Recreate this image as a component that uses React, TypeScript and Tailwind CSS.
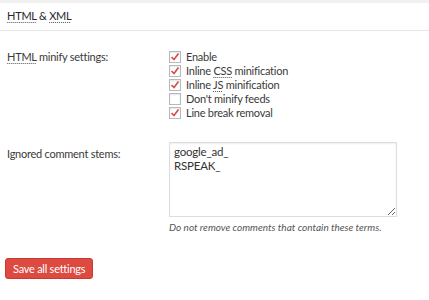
import React from "react";

const options = [
  { label: "Enable", checked: true },
  { label: "Inline CSS minification", checked: true, abbr: "CSS" },
  { label: "Inline JS minification", checked: true, abbr: "JS" },
  { label: "Don't minify feeds", checked: false },
  { label: "Line break removal", checked: true },
];

function Abbr({ children }: { children: React.ReactNode }) {
  return <abbr className="no-underline bg-[linear-gradient(to_right,#555_1px,transparent_1px)] bg-[length:2px_1px] bg-repeat-x bg-bottom pb-[1px]">{children}</abbr>;
}

function Check({ checked }: { checked: boolean }) {
  return (
    <span className="w-[12px] h-[12px] shrink-0 border border-[#b4b9be] bg-white flex items-center justify-center shadow-[inset_0_1px_2px_rgba(0,0,0,0.1)]">
      {checked && (
        <svg width="10" height="10" viewBox="0 0 10 10">
          <path d="M1.5 5 L4 7.5 L8.5 1.5" fill="none" stroke="#d54e4e" strokeWidth="1.7" />
        </svg>
      )}
    </span>
  );
}

function renderLabel(label: string, abbr?: string) {
  if (!abbr) return label;
  const [a, b] = label.split(abbr);
  return (
    <>
      {a}
      <Abbr>{abbr}</Abbr>
      {b}
    </>
  );
}

export default function App() {
  return (
    <div className="w-[429px] h-[300px] bg-white text-[#3a3a3a] text-[11px] tracking-[-0.25px] font-['Lato',sans-serif] border-t-[3px] border-[#f1f1f1]">
      <div className="h-[28px] border-b border-[#e5e5e5] flex items-center px-[7px] text-[11px] text-[#23282d]">
        <span>
          <Abbr>HTML</Abbr> &amp; <Abbr>XML</Abbr>
        </span>
      </div>

      <div className="flex pt-[19px] pl-[7px]">
        <div className="w-[162px] leading-[14px]">
          <Abbr>HTML</Abbr> minify settings:
        </div>
        <div className="flex flex-col">
          {options.map((o) => (
            <label key={o.label} className="flex items-center h-[14px] gap-[5px]">
              <Check checked={o.checked} />
              <span className="leading-[14px]">{renderLabel(o.label, o.abbr)}</span>
            </label>
          ))}
        </div>
      </div>

      <div className="flex pt-[22px] pl-[7px]">
        <div className="w-[162px] pt-[4px]">Ignored comment stems:</div>
        <div className="flex flex-col">
          <textarea
            className="w-[228px] h-[75px] border border-[#ddd] px-[4px] py-[2px] text-[11.5px] leading-[14px] tracking-[-0.2px] text-[#333] resize-y outline-none shadow-[inset_0_1px_2px_rgba(0,0,0,0.07)] font-['Lato',sans-serif]"
            defaultValue={"google_ad_\nRSPEAK_"}
          />
          <p className="italic text-[10px] tracking-normal text-[#555] mt-[3px]">Do not remove comments that contain these terms.</p>
        </div>
      </div>

      <div className="pt-[23px] pl-[5px]">
        <button className="h-[21px] px-[7px] bg-[#dd4a40] border border-[#c9392f] rounded-[3px] text-white text-[11px] tracking-[-0.25px] leading-none font-['Lato',sans-serif]">
          Save all settings
        </button>
      </div>
    </div>
  );
}
